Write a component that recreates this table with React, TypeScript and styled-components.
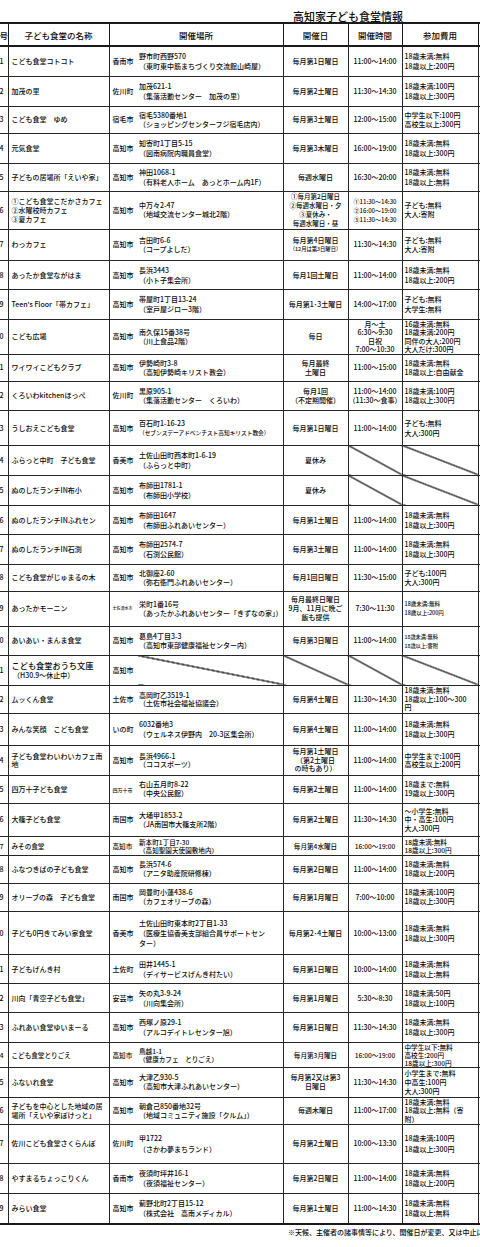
import React from 'react'
import styled, { createGlobalStyle, css } from 'styled-components'

type L = string | [string, number]

interface Item {
  n: number
  h: number
  lh?: number
  fs?: number
  name: L[]
  city: L
  addr?: L[]
  date?: L[]
  time?: L[]
  fee?: L[]
  slash?: string[]
}

const rows: Item[] = [
  { n: 1, h: 30, name: ['こども食堂コトコト'], city: '香南市', addr: ['野市町西野570', '（東町東中筋まちづくり交流館山崎屋）'], date: ['毎月第1日曜日'], time: ['11:00〜14:00'], fee: ['18歳未満:無料', '18歳以上:200円'] },
  { n: 2, h: 30, name: ['加茂の里'], city: '佐川町', addr: ['加茂621-1', '（集落活動センター　加茂の里）'], date: ['毎月第2土曜日'], time: ['11:30〜14:30'], fee: ['18歳未満:100円', '18歳以上:300円'] },
  { n: 3, h: 27, lh: 9, name: ['こども食堂　ゆめ'], city: '宿毛市', addr: ['宿毛5380番地1', '（ショッピングセンターフジ宿毛店内）'], date: ['毎月第3土曜日'], time: ['12:00〜15:00'], fee: ['中学生以下:100円', '高校生以上:300円'] },
  { n: 4, h: 30, name: ['元気食堂'], city: '高知市', addr: ['知寄町1丁目5-15', '（図南病院内職員食堂）'], date: ['毎月第3木曜日'], time: ['16:00〜19:00'], fee: ['18歳未満:無料', '18歳以上:300円'] },
  { n: 5, h: 28, name: ['子どもの居場所「えいや家」'], city: '高知市', addr: ['神田1068-1', '（有料老人ホーム　あっとホーム内1F）'], date: ['毎週水曜日'], time: ['16:30〜20:00'], fee: ['18歳未満:無料', '18歳以上:無料'] },
  { n: 6, h: 38, lh: 9, name: ['①こども食堂こだかさカフェ', '②水曜校時カフェ', '③夏カフェ'], city: '高知市', addr: ['中万々2-47', '（地域交流センター城北2階）'], date: [['①毎月第2日曜日', 6.5], ['②毎週水曜日・夕', 6.5], ['③夏休み・', 6.5], ['毎週水曜日・昼', 6.5]], time: [['①11:30〜14:30', 6], ['②16:00〜19:00', 6], ['③11:30〜14:30', 6]], fee: ['子ども:無料', '大人:寄附'] },
  { n: 7, h: 31, lh: 9, name: ['わっカフェ'], city: '高知市', addr: ['吉田町6-6', '（コープよしだ）'], date: ['毎月第4日曜日', ['（12月は第3日曜日）', 5.3]], time: ['11:30〜14:30'], fee: ['子ども:無料', '大人:寄附'] },
  { n: 8, h: 29, name: ['あったか食堂ながはま'], city: '高知市', addr: ['長浜3443', '（小ト子集会所）'], date: ['毎月1回土曜日'], time: ['11:00〜14:00'], fee: ['18歳未満:無料', '18歳以上:200円'] },
  { n: 9, h: 30, name: ["Teen's Floor「帯カフェ」"], city: '高知市', addr: ['帯屋町1丁目13-24', '（室戸屋ジロー3階）'], date: ['毎月第1･3土曜日'], time: ['14:00〜17:00'], fee: ['子ども:無料', '大学生:無料'] },
  { n: 10, h: 35, lh: 8.5, name: ['こども広場'], city: '高知市', addr: ['南久保15番38号', '（川上食品2階）'], date: ['毎日'], time: ['月〜土', '6:30〜9:30', '日祝', '7:00〜10:30'], fee: ['16歳未満:無料', '18歳未満:200円', '同伴の大人:200円', '大人だけ:300円'] },
  { n: 11, h: 27, lh: 9, name: ['ワイワイこどもクラブ'], city: '高知市', addr: ['伊勢崎町3-8', '（高知伊勢崎キリスト教会）'], date: ['毎月最終', '土曜日'], time: ['11:00〜15:00'], fee: ['18歳未満:無料', '18歳以上:自由献金'] },
  { n: 12, h: 29, lh: 9, name: ['くろいわkitchenほっぺ'], city: '佐川町', addr: ['黒原905-1', '（集落活動センター　くろいわ）'], date: ['毎月1回', '（不定期開催）'], time: ['11:00〜14:00', '（11:30〜食事）'], fee: ['18歳未満:100円', '18歳以上:300円'] },
  { n: 13, h: 35, name: ['うしおえこども食堂'], city: '高知市', addr: ['百石町1-16-23', ['（セブンスデーアドベンチスト高知キリスト教会）', 5.7]], date: ['毎月第1日曜日'], time: ['11:00〜14:00'], fee: ['子ども:無料', '大人:300円'] },
  { n: 14, h: 30, name: ['ふらっと中町　子ども食堂'], city: '香美市', addr: ['土佐山田町西本町1-6-19', '（ふらっと中町）'], date: ['夏休み'], slash: ['time', 'fee'] },
  { n: 15, h: 30, name: ['ぬのしだランチIN布小'], city: '高知市', addr: ['布師田1781-1', '（布師田小学校）'], date: ['夏休み'], slash: ['time', 'fee'] },
  { n: 16, h: 29, name: ['ぬのしだランチINふれセン'], city: '高知市', addr: ['布師田1647', '（布師田ふれあいセンター）'], date: ['毎月第1土曜日'], time: ['11:00〜14:00'], fee: ['18歳未満:無料', '18歳以上:300円'] },
  { n: 17, h: 30, name: ['ぬのしだランチIN石渕'], city: '高知市', addr: ['布師田2574-7', '（石渕公民館）'], date: ['毎月第3土曜日'], time: ['11:00〜14:00'], fee: ['18歳未満:無料', '18歳以上:300円'] },
  { n: 18, h: 27, lh: 9, name: ['こども食堂がじゅまるの木'], city: '高知市', addr: ['北御座2-60', '（弥右衛門ふれあいセンター）'], date: ['毎月1回日曜日'], time: ['11:30〜15:00'], fee: ['子ども:100円', '大人:300円'] },
  { n: 19, h: 35, lh: 9, name: ['あったかモーニン'], city: ['土佐清水市', 4], addr: ['栄町1番16号', '（あったかふれあいセンター「きずなの家」）'], date: ['毎月最終日曜日', '9月、11月に晩ご', '飯も提供'], time: ['7:30〜11:30'], fee: [['18歳未満:無料', 5.5], ['18歳以上:200円', 5.5]] },
  { n: 20, h: 29, lh: 9, name: ['あいあい・まんま食堂'], city: '高知市', addr: ['葛島4丁目3-3', '（高知市東部健康福祉センター内）'], date: ['毎月第3日曜日'], time: ['11:00〜14:00'], fee: [['18歳未満:無料', 5.2], ['18歳以上:寄附', 5.2]] },
  { n: 21, h: 30, name: [['こども食堂おうち文庫', 8.2], '\u00a0（H30.9〜休止中）'], city: '高知市', slash: ['addr', 'date', 'time', 'fee'] },
  { n: 22, h: 28, lh: 8.5, name: ['ムッくん食堂'], city: '土佐市', addr: ['高岡町乙3519-1', '（土佐市社会福祉協議会）'], date: ['毎月第4土曜日'], time: ['11:30〜14:30'], fee: ['18歳未満:無料', '18歳以上:100〜300', '円'] },
  { n: 23, h: 32, name: ['みんな笑顔　こども食堂'], city: 'いの町', addr: ['6032番地3', '（ウェルネス伊野内　20-3区集会所）'], date: ['毎月第4土曜日'], time: ['11:00〜14:00'], fee: ['18歳未満:無料', '18歳以上:300円'] },
  { n: 24, h: 30, lh: 8.5, name: ['子ども食堂わいわいカフェ南', '地'], city: '高知市', addr: ['長浜4966-1', '（ココスポーツ）'], date: ['毎月第1土曜日', '（第2土曜日', 'の時もあり）'], time: ['11:00〜14:00'], fee: ['中学生まで:100円', '高校生以上:200円'] },
  { n: 25, h: 28, lh: 9, name: ['四万十子ども食堂'], city: ['四万十市', 5], addr: ['右山五月町8-22', '（中央公民館）'], date: ['毎月第2土曜日'], time: ['11:00〜14:00'], fee: ['18歳まで:無料', '19歳以上:300円'] },
  { n: 26, h: 33, lh: 8.5, name: ['大篠子ども食堂'], city: '南国市', addr: ['大埇甲1853-2', '（JA南国市大篠支所2階）'], date: ['毎月第2土曜日'], time: ['11:30〜14:30'], fee: ['〜小学生:無料', '中・高生:100円', '大人:300円'] },
  { n: 27, h: 19, lh: 8, fs: 6.6, name: ['みその食堂'], city: '高知市', addr: ['新本町1丁目7-30', '（高知聖園天使園敷地内）'], date: ['毎月第4水曜日'], time: ['16:00〜19:00'], fee: ['18歳未満:無料', '18歳以上:300円'] },
  { n: 28, h: 28, lh: 9, name: ['ふなつきばの子ども食堂'], city: '高知市', addr: ['長浜574-6', '（アニタ助産院研修棟）'], date: ['毎月第2日曜日'], time: ['11:00〜14:00'], fee: ['18歳未満:無料', '18歳以上:200円'] },
  { n: 29, h: 28, lh: 9, name: ['オリーブの森　子ども食堂'], city: '南国市', addr: ['岡豊町小蓮438-6', '（カフェオリーブの森）'], date: ['毎月第1月曜日'], time: ['7:00〜10:00'], fee: ['18歳未満:100円', '18歳以上:300円'] },
  { n: 30, h: 43, name: ['子ども0円きてみい家食堂'], city: '香美市', addr: ['土佐山田町東本町2丁目1-33', '（医療生協香美支部組合員サポートセン', 'ター）'], date: ['毎月第2･4土曜日'], time: ['10:00〜13:00'], fee: ['18歳未満:無料', '18歳以上:300円'] },
  { n: 31, h: 29, name: ['子どもげんき村'], city: '土佐町', addr: ['田井1445-1', '（デイサービスげんき村たい）'], date: ['毎月第1日曜日'], time: ['10:00〜14:00'], fee: ['18歳未満:無料', '18歳以上:無料'] },
  { n: 32, h: 29, name: ['川向「青空子ども食堂」'], city: '安芸市', addr: ['矢の丸3-9-24', '（川向集会所）'], date: ['毎月第1月曜日'], time: ['5:30〜8:30'], fee: ['18歳未満:50円', '18歳以上:100円'] },
  { n: 33, h: 30, name: ['ふれあい食堂ゆいまーる'], city: '高知市', addr: ['西塚ノ原29-1', '（アルコデイトレセンター旭）'], date: ['毎月第1日曜日'], time: ['11:30〜14:30'], fee: ['18歳未満:無料', '18歳以上:300円'] },
  { n: 34, h: 24, lh: 8, fs: 6.6, name: ['こども食堂とりごえ'], city: '高知市', addr: ['鳥越1-1', '（健康カフェ　とりごえ）'], date: ['毎月第3月曜日'], time: ['16:00〜19:00'], fee: ['中学生以下:無料', '高校生:200円', '18歳以上:300円'] },
  { n: 35, h: 30, lh: 9, name: ['ふないれ食堂'], city: '高知市', addr: ['大津乙930-5', '（高知市大津ふれあいセンター）'], date: ['毎月第2又は第3', '日曜日'], time: ['11:30〜14:30'], fee: ['小学生まで:無料', '中高生:100円', '大人:300円'] },
  { n: 36, h: 27, lh: 8.5, name: ['子どもを中心とした地域の居', '場所「えいや家ぽけっと」'], city: '高知市', addr: ['朝倉己850番地32号', '（地域コミュニティ施設「クルム」）'], date: ['毎週木曜日'], time: ['11:00〜17:00'], fee: ['18歳未満:無料', '18歳以上:無料（寄', '附）'] },
  { n: 37, h: 39, lh: 11, name: ['佐川こども食堂さくらんぼ'], city: '佐川町', addr: ['甲1722', '（さかわ夢まちランド）'], date: ['毎月第2土曜日'], time: ['10:00〜13:30'], fee: ['18歳未満:100円', '18歳以上:300円'] },
  { n: 38, h: 30, name: ['やすまるちょっこりくん'], city: '香南市', addr: ['夜須町坪井16-1', '（夜須福祉センター）'], date: ['毎月第2日曜日'], time: ['11:00〜14:00'], fee: ['18歳未満:無料', '18歳以上:200円'] },
  { n: 39, h: 31, lh: 10.5, name: ['みらい食堂'], city: '高知市', addr: ['薊野北町2丁目15-12', '（株式会社　高南メディカル）'], date: ['毎月第1土曜日'], time: ['11:00〜14:30'], fee: ['18歳未満:無料', '18歳以上:無料'] },
]

const GlobalStyle = createGlobalStyle`
  html, body {
    margin: 0;
    padding: 0;
    background: #fff;
  }
  body {
    font-family: "Noto Sans CJK JP", "Noto Sans", sans-serif;
    color: #0c0c0c;
    overflow: hidden;
  }
`

const Page = styled.div`
  width: 480px;
  height: 1247px;
  overflow: hidden;
`

const Title = styled.div`
  padding: 10px 0 0 293px;
  height: 12px;
  font-size: 11px;
  line-height: 12px;
  font-weight: 500;
  white-space: nowrap;
`

const Table = styled.table`
  border-collapse: collapse;
  table-layout: fixed;
  width: 548px;
  margin-left: -11px;
  border: 2px solid #1a1a1a;
  font-size: 7px;
  font-weight: 500;
`

const Head = styled.th`
  height: 21px;
  padding: 0;
  font-size: 8.5px;
  font-weight: 500;
  text-align: center;
  white-space: nowrap;
  border: 1px solid #1a1a1a;
  border-bottom: 2px solid #1a1a1a;
`

const Row = styled.tr<{ $h: number; $lh: number; $fs: number }>`
  height: ${(p) => p.$h}px;
  line-height: ${(p) => p.$lh}px;
  font-size: ${(p) => p.$fs}px;
`

const slashLine = css`
  background: linear-gradient(
    to top right,
    transparent calc(50% - 0.9px),
    #1a1a1a calc(50% - 0.4px),
    #1a1a1a calc(50% + 0.4px),
    transparent calc(50% + 0.9px)
  );
`

const Cell = styled.td<{ $slash?: boolean }>`
  border: 1px solid #262626;
  padding: 0;
  vertical-align: middle;
  overflow: hidden;
  ${(p) => p.$slash && slashLine}
`

const NumCell = styled(Cell)`
  text-align: right;
  padding-right: 4px;
`

const NameCell = styled(Cell)`
  padding-left: 3px;
`

const CityCell = styled(Cell)`
  padding-left: 3px;
  border-right: none;
`

const AddrCell = styled(Cell)`
  padding-left: 1px;
  border-left: none;
`

const CenterCell = styled(Cell)`
  text-align: center;
`

const FeeCell = styled(Cell)`
  padding-left: 2px;
`

const Line = styled.span<{ $size?: number }>`
  display: block;
  white-space: pre;
  ${(p) => p.$size && css`font-size: ${p.$size}px;`}
`

const Note = styled.div`
  padding: 1px 0 0 288px;
  font-size: 7px;
  line-height: 12px;
  font-weight: 500;
  white-space: nowrap;
`

function Lines({ items }: { items?: L[] }) {
  return (
    <>
      {items?.map((l, i) =>
        typeof l === 'string' ? <Line key={i}>{l}</Line> : <Line key={i} $size={l[1]}>{l[0]}</Line>
      )}
    </>
  )
}

export default function App() {
  return (
    <Page>
      <GlobalStyle />
      <Title>高知家子ども食堂情報</Title>
      <Table>
        <colgroup>
          <col style={{ width: 18 }} />
          <col style={{ width: 101 }} />
          <col style={{ width: 29 }} />
          <col style={{ width: 145 }} />
          <col style={{ width: 65 }} />
          <col style={{ width: 54 }} />
          <col style={{ width: 76 }} />
          <col style={{ width: 60 }} />
        </colgroup>
        <thead>
          <tr>
            <Head>番号</Head>
            <Head>子ども食堂の名称</Head>
            <Head colSpan={2}>開催場所</Head>
            <Head>開催日</Head>
            <Head>開催時間</Head>
            <Head>参加費用</Head>
            <Head>連絡先</Head>
          </tr>
        </thead>
        <tbody>
          {rows.map((r) => {
            const s = r.slash ?? []
            return (
              <Row key={r.n} $h={r.h} $lh={r.lh ?? 10} $fs={r.fs ?? 7}>
                <NumCell>{r.n}</NumCell>
                <NameCell>
                  <Lines items={r.name} />
                </NameCell>
                <CityCell>
                  <Lines items={[r.city]} />
                </CityCell>
                <AddrCell $slash={s.includes('addr')}>
                  <Lines items={r.addr} />
                </AddrCell>
                <CenterCell $slash={s.includes('date')}>
                  <Lines items={r.date} />
                </CenterCell>
                <CenterCell $slash={s.includes('time')}>
                  <Lines items={r.time} />
                </CenterCell>
                <FeeCell $slash={s.includes('fee')}>
                  <Lines items={r.fee} />
                </FeeCell>
                <Cell />
              </Row>
            )
          })}
        </tbody>
      </Table>
      <Note>※天候、主催者の諸事情等により、開催日が変更、又は中止になる場合があります。</Note>
    </Page>
  )
}
